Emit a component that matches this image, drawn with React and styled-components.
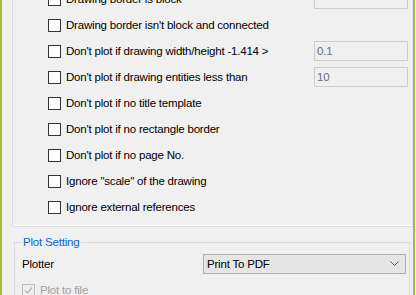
import React from 'react'
import styled, { createGlobalStyle } from 'styled-components'

const GlobalStyle = createGlobalStyle`
  html, body {
    margin: 0;
    padding: 0;
    background: #f0f0f0;
    overflow: hidden;
  }
  body {
    font-family: "Liberation Sans", Arial, sans-serif;
    font-size: 11.5px;
    letter-spacing: -0.2px;
    color: #000;
  }
`

const Window = styled.div`
  display: flex;
  width: 416px;
  height: 295px;
  overflow: hidden;
  background: #f0f0f0;
`

// тонкая зелёная рамка окна по краям
const Edge = styled.div`
  width: 2px;
  flex: none;
  background: #a8b849;
  margin-right: ${p => (p.right ? '1px' : '0')};
`

const Content = styled.div`
  flex: 1;
  display: flex;
  flex-direction: column;
  min-width: 0;
`

const Group = styled.section`
  margin: -14px 0 0 10px;
  padding: 0 0 6px 0;
  border: 1px solid #dcdcdc;
  border-top: none;
  box-shadow: inset -1px -1px 0 #fff;
`

const Row = styled.div`
  display: flex;
  align-items: center;
  height: 26px;
  padding-left: 35px;
  padding-right: 4px;
`

const Box = styled.span`
  width: 11px;
  height: 11px;
  flex: none;
  border: 1px solid ${p => (p.disabled ? '#bcbcbc' : '#333')};
  background: ${p => (p.disabled ? '#f0f0f0' : '#fff')};
  display: flex;
  align-items: center;
  justify-content: center;
`

const Label = styled.span`
  margin-left: 5px;
  white-space: nowrap;
  color: ${p => (p.disabled ? '#a0a0a0' : '#000')};
  flex: 1;
`

const Field = styled.div`
  width: 90px;
  height: 18px;
  border: 1px solid #cccccc;
  background: #f0f0f0;
  color: #6d6d6d;
  padding-left: 2px;
  line-height: 18px;
  flex: none;
`

const Fieldset = styled.fieldset`
  margin: 8px 3px 0 12px;
  padding: 5px 0 0 7px;
  border: 1px solid #dcdcdc;
  border-bottom: none;
  min-width: 0;
`

const Legend = styled.legend`
  padding: 0 2px 0 1px;
  color: #0a64d2;
  line-height: 14px;
`

const SettingRow = styled.div`
  display: flex;
  align-items: center;
  height: 20px;
`

const SettingLabel = styled.span`
  width: 181px;
  flex: none;
`

const Select = styled.div`
  flex: 1;
  height: 18px;
  border: 1px solid #adadad;
  background: #e5e5e5;
  display: flex;
  align-items: center;
  justify-content: space-between;
  padding: 0 6px 0 3px;
  margin-right: 3px;
`

const FileRow = styled.div`
  display: flex;
  align-items: center;
  height: 16px;
  margin-top: 8px;
`

const Check = ({ checked, disabled }) => (
  <Box disabled={disabled}>
    {checked && (
      <svg width="9" height="9" viewBox="0 0 9 9">
        <path d="M1 4.5 L3.5 7 L8 1.5" fill="none" stroke={disabled ? '#b5b5b5' : '#333'} strokeWidth="1.3" />
      </svg>
    )}
  </Box>
)

const options = [
  { text: 'Drawing border is block', value: '' },
  { text: "Drawing border isn't block and connected" },
  { text: "Don't plot if drawing width/height -1.414 >", value: '0.1' },
  { text: "Don't plot if drawing entities less than", value: '10' },
  { text: "Don't plot if no title template" },
  { text: "Don't plot if no rectangle border" },
  { text: "Don't plot if no page No." },
  { text: 'Ignore "scale" of the drawing' },
  { text: 'Ignore external references' },
]

export default function App() {
  return (
    <Window>
      <GlobalStyle />
      <Edge />
      <Content>
        <Group>
          {options.map((o, i) => (
            <Row key={i}>
              <Check />
              <Label>{o.text}</Label>
              {o.value !== undefined && <Field>{o.value}</Field>}
            </Row>
          ))}
        </Group>
        <Fieldset>
          <Legend>Plot Setting</Legend>
          <SettingRow>
            <SettingLabel>Plotter</SettingLabel>
            <Select>
              <span>Print To PDF</span>
              <svg width="9" height="6" viewBox="0 0 9 6">
                <path d="M0.5 0.5 L4.5 4.5 L8.5 0.5" fill="none" stroke="#555" strokeWidth="1" />
              </svg>
            </Select>
          </SettingRow>
          <FileRow>
            <Check checked disabled />
            <Label disabled>Plot to file</Label>
          </FileRow>
        </Fieldset>
      </Content>
      <Edge right />
    </Window>
  )
}
